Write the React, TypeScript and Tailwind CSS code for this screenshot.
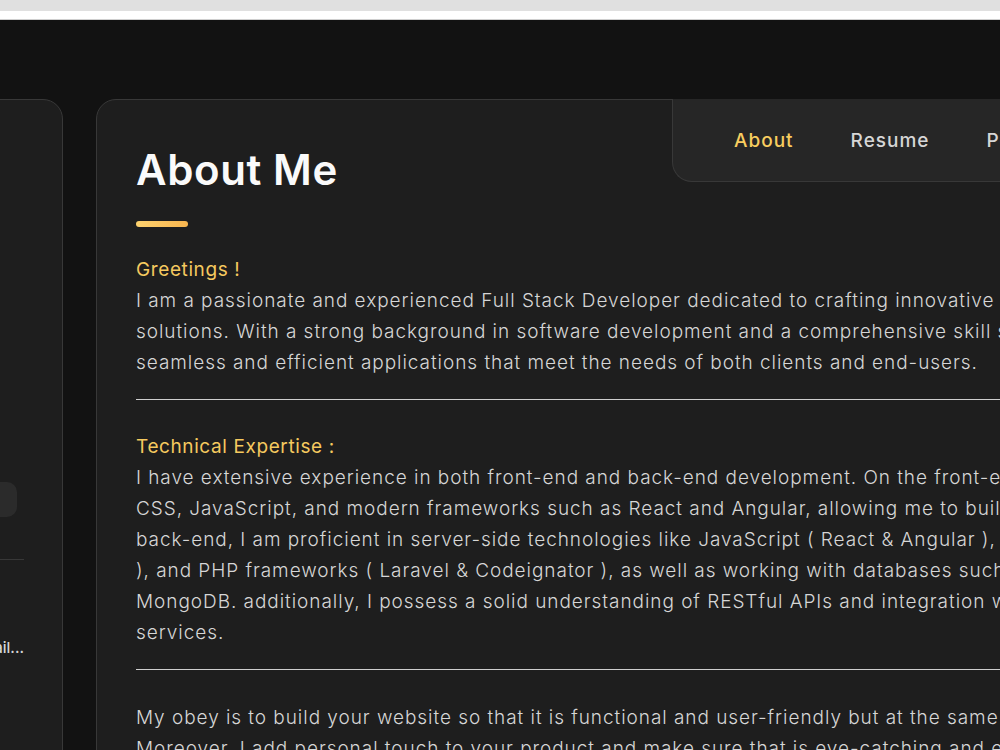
import { Mail } from 'lucide-react';

const greetings = [
  'I am a passionate and experienced Full Stack Developer dedicated to crafting innovative web',
  'solutions. With a strong background in software development and a comprehensive skill set, I build',
  'seamless and efficient applications that meet the needs of both clients and end-users.',
];

const expertise = [
  'I have extensive experience in both front-end and back-end development. On the front-end, I use HTML,',
  'CSS, JavaScript, and modern frameworks such as React and Angular, allowing me to build responsive UIs. On the',
  'back-end, I am proficient in server-side technologies like JavaScript ( React & Angular ), Node.js ( Express',
  '), and PHP frameworks ( Laravel & Codeignator ), as well as working with databases such as MySQL and',
  'MongoDB. additionally, I possess a solid understanding of RESTful APIs and integration with third-party',
  'services.',
];

const obey = [
  'My obey is to build your website so that it is functional and user-friendly but at the same time attractive.',
  'Moreover, I add personal touch to your product and make sure that is eye-catching and easy to use.',
];

const navItems = ['About', 'Resume', 'Portfolio', 'Blog', 'Contact'];

function Lines({ lines }: { lines: string[] }) {
  return (
    <div className="text-[19px] font-light leading-[31px] tracking-[0.95px] text-[#d6d6d6]">
      {lines.map((l) => (
        <p key={l} className="whitespace-nowrap">
          {l}
        </p>
      ))}
    </div>
  );
}

function Sidebar() {
  return (
    <aside className="-ml-[237px] h-[700px] w-[300px] shrink-0 rounded-[20px] border border-[#383838] bg-[#1e1e1e] px-[38px] pt-[60px]">
      <div className="mx-auto h-[150px] w-[150px] rounded-[28px] bg-[#2b2b2b]" />
      <h1 className="mt-[30px] text-center text-[24px] font-medium text-white">Developer</h1>
      <div className="mx-auto mt-[106px] flex h-[35px] w-[208px] items-center justify-center rounded-[10px] bg-[#2b2b2b] text-[12px] text-white">
        Full Stack Developer
      </div>
      <div className="mt-[42px] h-px bg-[#383838]" />
      <div className="mt-[55px] flex items-center gap-4">
        <div className="flex h-[48px] w-[48px] shrink-0 items-center justify-center rounded-[12px] bg-[#2b2b2b] text-[#f5c95f]">
          <Mail className="h-[18px] w-[18px]" />
        </div>
        <div className="min-w-0 flex-1">
          <p className="text-[12px] leading-[18px] text-[#8a8a8a]">EMAIL</p>
          <p className="flex justify-end overflow-hidden whitespace-nowrap text-[15px] font-medium leading-[24px] text-[#d6d6d6]">
            <span>developer.sohail.contact@gmail...</span>
          </p>
        </div>
      </div>
    </aside>
  );
}

function Divider() {
  return <div className="mt-[21px] h-px bg-[#cfcfcf]" />;
}

export default function App() {
  return (
    <div className="h-[750px] w-full overflow-hidden bg-[#121212] font-['Inter',sans-serif]">
      <div className="h-[11px] bg-[#e0e0e0]" />
      <div className="h-[8px] bg-white" />
      <div className="h-px bg-[#cfcfcf]" />
      <div className="flex gap-[33px] pt-[79px]">
        <Sidebar />
        <article className="relative h-[800px] w-[1100px] shrink-0 rounded-[20px] border border-[#383838] bg-[#1e1e1e] pl-[39px] pt-[46px]">
          <nav className="absolute -top-px left-[575px] flex h-[83px] items-center gap-[57px] rounded-bl-[20px] border-b border-l border-[#383838] bg-[#262626] pl-[61px] pr-[40px] pt-[2px]">
            {navItems.map((n, i) => (
              <span
                key={n}
                className={
                  'text-[19px] font-medium tracking-[1px] ' + (i === 0 ? 'text-[#f8cd5f]' : 'text-[#d6d6d6]')
                }
              >
                {n}
              </span>
            ))}
          </nav>

          <h2 className="text-[42px] font-semibold leading-[48px] tracking-[0.6px] text-[#fafafa]">About Me</h2>
          <div className="mt-[27px] h-[6px] w-[52px] rounded-full bg-gradient-to-r from-[#fdd26e] to-[#f9b64f]" />

          <section className="mt-[27px]">
            <h3 className="text-[19px] leading-[31px] tracking-[0.6px] text-[#f5c95f]">Greetings !</h3>
            <Lines lines={greetings} />
          </section>
          <Divider />

          <section className="mt-[31px]">
            <h3 className="text-[19px] leading-[31px] tracking-[0.6px] text-[#f5c95f]">Technical Expertise :</h3>
            <Lines lines={expertise} />
          </section>
          <Divider />

          <section className="mt-[32px]">
            <Lines lines={obey} />
          </section>
        </article>
      </div>
    </div>
  );
}
